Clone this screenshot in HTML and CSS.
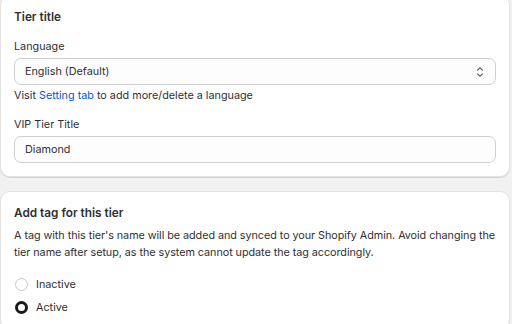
FILE: index.html
```html
<!DOCTYPE html>
<html lang="en">
<head>
  <meta charset="UTF-8">
  <meta name="viewport" content="width=device-width, initial-scale=1.0">
  <title>Tier settings</title>
  <link rel="stylesheet" href="styles.css">
</head>
<body>

  <div class="page">
    <!-- tier title -->
    <div class="card">
      <h2 class="card-title">Tier title</h2>

      <div class="field">
        <label class="field-label" for="language">Language</label>
        <div class="select">
          <span class="select-value">English (Default)</span>
          <svg class="select-icon" width="10" height="12" viewBox="0 0 10 12">
            <path d="M2.5 4.2 5 1.8l2.5 2.4M2.5 7.8 5 10.2l2.5-2.4" fill="none" stroke="#5c5c5c" stroke-width="1.1" stroke-linecap="round" stroke-linejoin="round"/>
          </svg>
        </div>
        <p class="help">Visit <a href="#">Setting tab</a> to add more/delete a language</p>
      </div>

      <div class="field">
        <label class="field-label" for="vip-title">VIP Tier Title</label>
        <div class="input">Diamond</div>
      </div>
    </div>

    <!-- tag -->
    <div class="card">
      <h2 class="card-title">Add tag for this tier</h2>
      <p class="text">A tag with this tier's name will be added and synced to your Shopify Admin. Avoid changing the tier name after setup, as the system cannot update the tag accordingly.</p>

      <div class="radios">
        <label class="radio">
          <span class="radio-dot"></span>
          Inactive
        </label>
        <label class="radio">
          <span class="radio-dot checked"></span>
          Active
        </label>
      </div>
    </div>
  </div>

</body>
</html>
```

FILE: styles.css
```css
body {
  margin: 0;
  background-color: #f1f1f1;
  font-family: Inter, "Noto Sans", sans-serif;
  font-size: 10.8px;
  line-height: 17px;
  color: #303030;
}

.page {
  display: flex;
  flex-direction: column;
  gap: 14px;
  margin: -5px 2px 0 0;
}

.card {
  background-color: #fff;
  border: 1px solid #e3e3e3;
  border-radius: 10px;
  box-shadow: 0 1px 0 #d4d4d4;
  padding: 13px;
}

.card-title {
  margin: 0;
  font-size: 11.8px;
  font-weight: 600;
  line-height: 17px;
}

.field {
  margin-top: 12px;
}

.field-label {
  display: block;
  margin-bottom: 3px;
}

.select,
.input {
  display: flex;
  align-items: center;
  height: 25px;
  padding: 0 10px;
  background-color: #fdfdfd;
  border: 1px solid #cfcfcf;
  border-radius: 7px;
}

.select {
  justify-content: space-between;
}

.help {
  margin: 2px 0 0;
}

.help a {
  color: #005bd3;
  text-decoration: none;
}

.text {
  margin: 5px -2px 0 0;
  letter-spacing: -0.05px;
}

.radios {
  display: flex;
  flex-direction: column;
  gap: 6px;
  margin-top: 15px;
}

.radio {
  display: flex;
  align-items: center;
  gap: 8px;
}

.radio-dot {
  box-sizing: border-box;
  width: 13px;
  height: 13px;
  border: 1px solid #c9c9c9;
  border-radius: 50%;
  margin-left: 1px;
}

.radio-dot.checked {
  border: 3.5px solid #1a1a1a;
}
```
